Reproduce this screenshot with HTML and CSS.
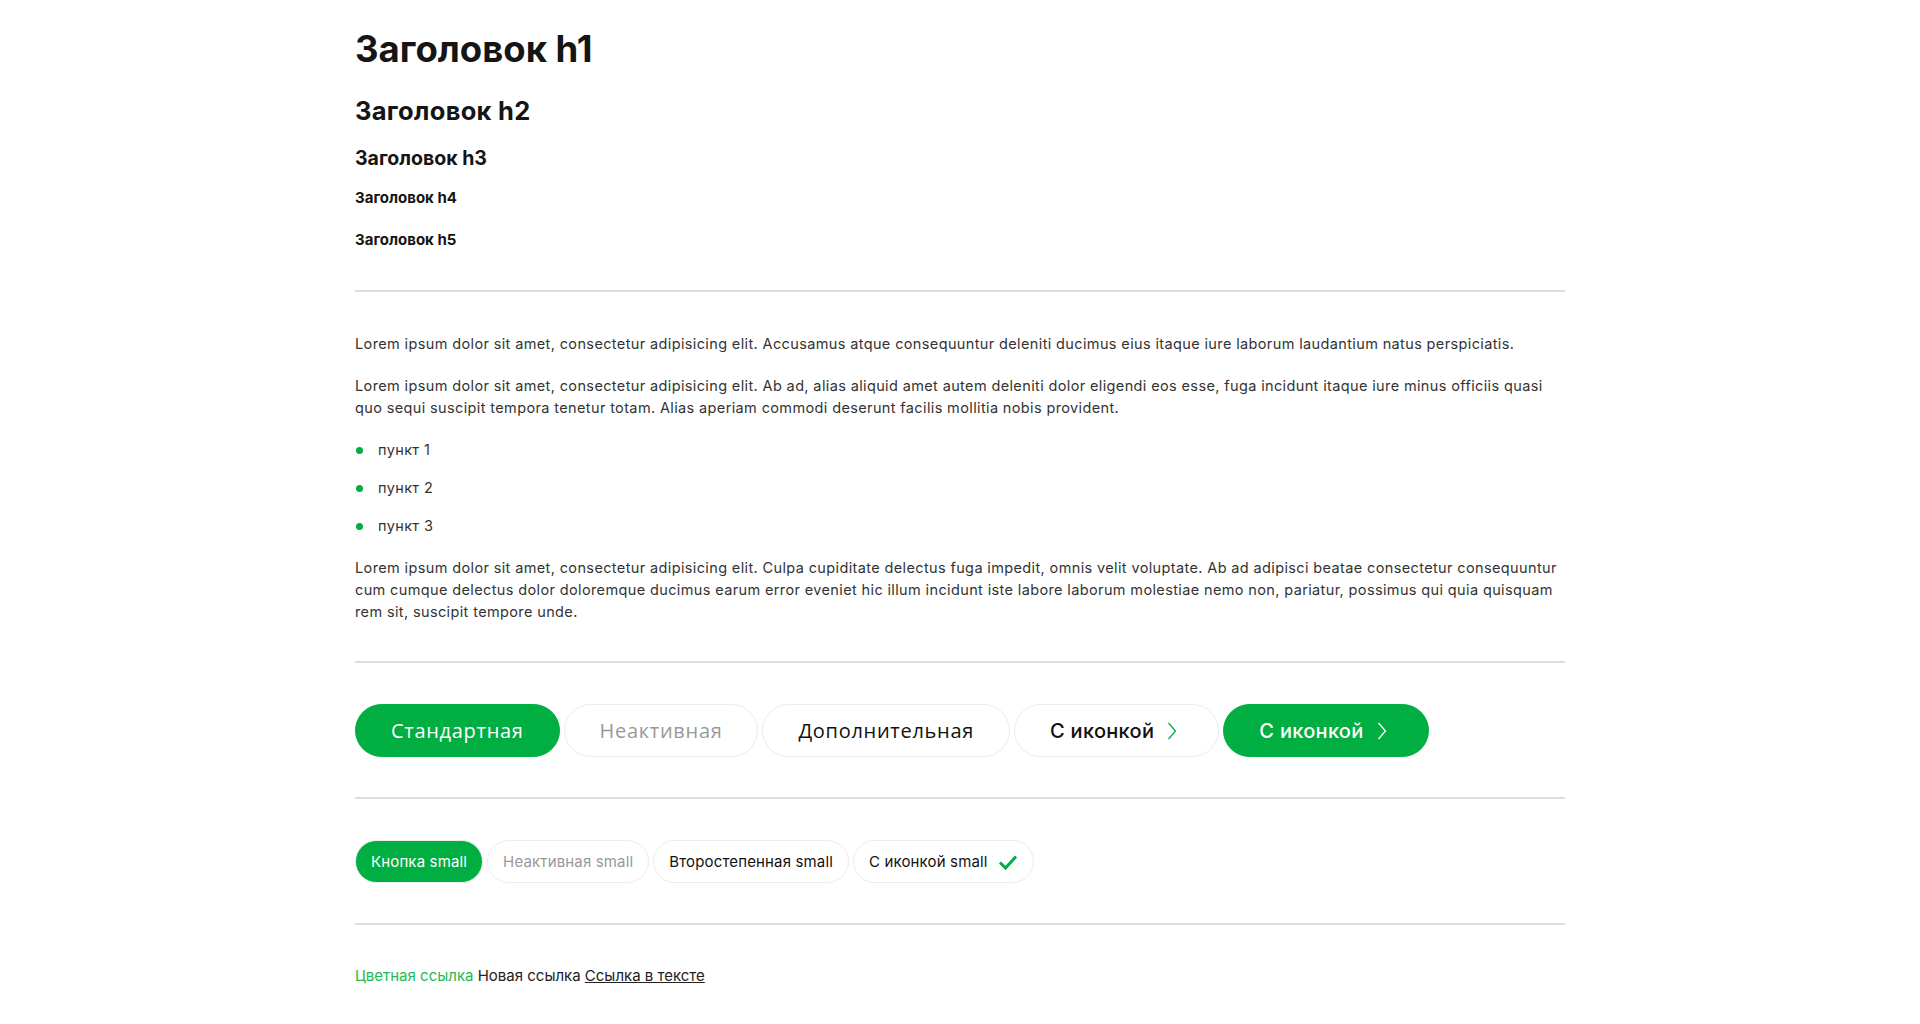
FILE: index.html
```html
<!DOCTYPE html>
<html lang="ru">
<head>
<meta charset="utf-8">
<title>UI kit</title>
<link rel="stylesheet" href="styles.css">
</head>
<body>
<div class="container">
  <h1 class="h1">Заголовок h1</h1>
  <h2 class="h2">Заголовок h2</h2>
  <h3 class="h3">Заголовок h3</h3>
  <h4 class="h4">Заголовок h4</h4>
  <h5 class="h5">Заголовок h5</h5>

  <hr class="sep">

  <div class="text">
    <p>Lorem ipsum dolor sit amet, consectetur adipisicing elit. Accusamus atque consequuntur deleniti ducimus eius itaque iure laborum laudantium natus perspiciatis.</p>
    <p>Lorem ipsum dolor sit amet, consectetur adipisicing elit. Ab ad, alias aliquid amet autem deleniti dolor eligendi eos esse, fuga incidunt itaque iure minus officiis quasi quo sequi suscipit tempora tenetur totam. Alias aperiam commodi deserunt facilis mollitia nobis provident.</p>
    <ul class="list">
      <li>пункт 1</li>
      <li>пункт 2</li>
      <li>пункт 3</li>
    </ul>
    <p>Lorem ipsum dolor sit amet, consectetur adipisicing elit. Culpa cupiditate delectus fuga impedit, omnis velit voluptate. Ab ad adipisci beatae consectetur consequuntur cum cumque delectus dolor doloremque ducimus earum error eveniet hic illum incidunt iste labore laborum molestiae nemo non, pariatur, possimus qui quia quisquam rem sit, suscipit tempore unde.</p>
  </div>

  <hr class="sep">

  <div class="btn-row">
    <a class="btn btn-primary" href="#">Стандартная</a>
    <a class="btn btn-disabled" href="#">Неактивная</a>
    <a class="btn btn-secondary" href="#">Дополнительная</a>
    <a class="btn btn-secondary btn-icon" href="#">С иконкой <svg class="chev" viewBox="0 0 10 20" width="10" height="20"><path d="M1.5 2 L8.5 10 L1.5 18" fill="none" stroke="#00ae42" stroke-width="1.3"/></svg></a>
    <a class="btn btn-primary btn-icon" href="#">С иконкой <svg class="chev" viewBox="0 0 10 20" width="10" height="20"><path d="M1.5 2 L8.5 10 L1.5 18" fill="none" stroke="#ffffff" stroke-width="1.3"/></svg></a>
  </div>

  <hr class="sep">

  <div class="btn-row">
    <a class="btn-sm btn-primary" href="#">Кнопка small</a>
    <a class="btn-sm btn-disabled" href="#">Неактивная small</a>
    <a class="btn-sm btn-secondary" href="#">Второстепенная small</a>
    <a class="btn-sm btn-secondary" href="#">С иконкой small <svg class="check" viewBox="0 0 20 16" width="20" height="16"><path d="M2 8.5 L7.5 14 L18 2.5" fill="none" stroke="#00ae42" stroke-width="3"/></svg></a>
  </div>

  <hr class="sep">

  <div class="links">
    <a class="link-color" href="#">Цветная ссылка</a>
    <a class="link-new" href="#">Новая ссылка</a>
    <a class="link-text" href="#">Ссылка в тексте</a>
  </div>
</div>
</body>
</html>
```

FILE: styles.css
```css
html, body {
  margin: 0;
  padding: 0;
  background: #ffffff;
}

body {
  font-family: Inter, "Noto Sans", sans-serif;
  color: #222222;
}

.container {
  width: 1210px;
  margin: 0 auto;
  padding-top: 29px;
}

.h1, .h2, .h3, .h4, .h5 {
  margin: 0;
  font-family: Inter, "Noto Sans", sans-serif;
  font-weight: 700;
  color: #151515;
}

.h1 {
  font-size: 36.5px;
  line-height: 40px;
}

.h2 {
  font-size: 25.5px;
  letter-spacing: 0.3px;
  line-height: 30px;
  margin-top: 27px;
}

.h3 {
  font-size: 19.5px;
  line-height: 24px;
  margin-top: 20px;
}

.h4 {
  font-size: 15px;
  line-height: 20px;
  margin-top: 18px;
}

.h5 {
  font-size: 15px;
  line-height: 20px;
  margin-top: 22px;
}

.sep {
  border: 0;
  height: 2px;
  background: #dddddd;
  margin: 40px 0 41px;
}

.text {
  font-size: 14.5px;
  letter-spacing: 0.37px;
  line-height: 22px;
  color: #333333;
  margin-bottom: -2px;
}

.text p {
  margin: 0 0 20px;
}

.text p:last-child {
  margin-bottom: 0;
}

.list {
  list-style: none;
  margin: 0 0 20px;
  padding: 0;
}

.list li {
  position: relative;
  padding-left: 23px;
  margin-bottom: 16px;
}

.list li:last-child {
  margin-bottom: 0;
}

.list li::before {
  content: "";
  position: absolute;
  left: 1px;
  top: 8px;
  width: 7px;
  height: 7px;
  border-radius: 50%;
  background: #00ae42;
}

.btn-row {
  display: flex;
  gap: 4px;
  align-items: center;
}

.btn {
  display: inline-flex;
  align-items: center;
  box-sizing: border-box;
  height: 53px;
  padding: 0 35px;
  border-radius: 27px;
  border: 1px solid #ececec;
  font-family: "Open Sans", sans-serif;
  font-size: 20px;
  letter-spacing: 0.7px;
  text-decoration: none;
}

.btn-primary {
  background: #00ae42;
  border-color: #00ae42;
  color: #ffffff;
}

.btn-disabled {
  background: #ffffff;
  color: #999999;
}

.btn-secondary {
  background: #ffffff;
  color: #111111;
}

.btn-icon {
  font-family: Inter, sans-serif;
  font-weight: 500;
  letter-spacing: 0.3px;
}

.chev {
  margin-left: 13px;
  margin-right: 6px;
}

.btn-sm {
  display: inline-flex;
  align-items: center;
  box-sizing: border-box;
  height: 43px;
  padding: 0 15px;
  border-radius: 22px;
  border: 1px solid #ececec;
  font-family: Inter, sans-serif;
  font-size: 15px;
  letter-spacing: 0.15px;
  text-decoration: none;
}

.check {
  margin-left: 10px;
}

.links {
  font-size: 15px;
  line-height: 20px;
  padding-bottom: 40px;
}

.links a {
  text-decoration: none;
}

.link-color {
  color: #1db954;
}

.link-new {
  color: #222222;
}

.link-text {
  color: #222222;
  text-decoration: underline !important;
}
```
